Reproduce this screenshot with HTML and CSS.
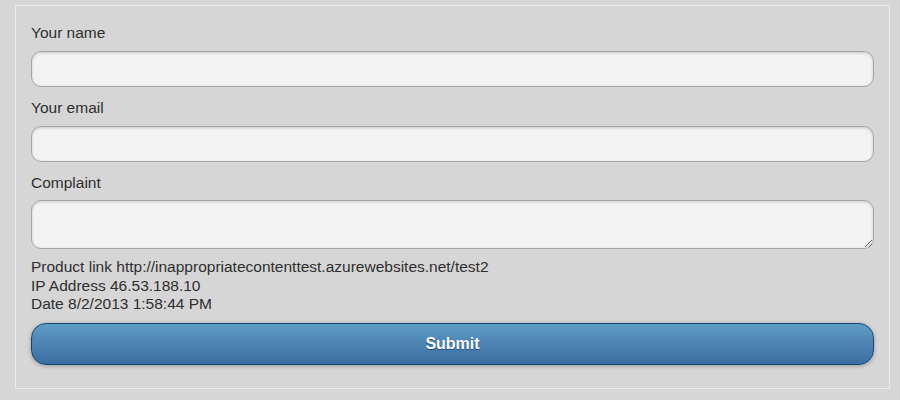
FILE: index.html
```html
<!DOCTYPE html>
<html>
<head>
<meta charset="utf-8">
<link rel="stylesheet" href="styles.css">
</head>
<body>
<form class="panel">
  <div class="field">
    <label class="label">Your name</label>
    <input class="input" type="text">
  </div>
  <div class="field">
    <label class="label">Your email</label>
    <input class="input" type="text">
  </div>
  <div class="field">
    <label class="label label-tight">Complaint</label>
    <textarea class="textarea"></textarea>
  </div>
  <div class="info">
    <div>Product link http://inappropriatecontenttest.azurewebsites.net/test2</div>
    <div>IP Address 46.53.188.10</div>
    <div>Date 8/2/2013 1:58:44 PM</div>
  </div>
  <button class="submit" type="button">Submit</button>
</form>
</body>
</html>
```
FILE: styles.css
```css
html, body {
  margin: 0;
  padding: 0;
  background: #d6d6d6;
  font-family: "Liberation Sans", Arial, sans-serif;
  font-size: 15.5px;
  color: #2f2f2f;
}
.panel {
  box-sizing: border-box;
  margin: 5px 10px 0 15px;
  width: 875px;
  height: 384px;
  border: 1px solid #ececec;
  padding: 16px 15px 0 15px;
  display: flex;
  flex-direction: column;
}
.field {
  display: flex;
  flex-direction: column;
  margin-bottom: 10px;
}
.label {
  line-height: 21px;
  height: 21px;
  margin-bottom: 8px;
}
.label-tight {
  margin-bottom: 7px;
}
.input, .textarea {
  box-sizing: border-box;
  width: 100%;
  height: 36px;
  border: 1px solid #a6a6a6;
  border-radius: 10px;
  background: #f3f3f3;
  box-shadow: inset 0 1px 3px rgba(0,0,0,0.18);
  margin: 0;
  padding: 0 8px;
  font-family: inherit;
  font-size: 16px;
  outline: none;
}
.textarea {
  height: 49px;
  resize: vertical;
  display: block;
}
.info {
  margin-top: -1px;
  line-height: 18.5px;
}
.submit {
  box-sizing: border-box;
  margin-top: 9px;
  width: 100%;
  height: 42px;
  border: 1px solid #14476f;
  border-radius: 15px;
  background: linear-gradient(#5f9cc6, #3a6da0);
  box-shadow: 0 1px 4px rgba(0,0,0,0.3);
  color: #fff;
  font-family: inherit;
  font-size: 16px;
  font-weight: bold;
  text-shadow: 0 1px 1px #1f4a70;
  cursor: pointer;
}
```
